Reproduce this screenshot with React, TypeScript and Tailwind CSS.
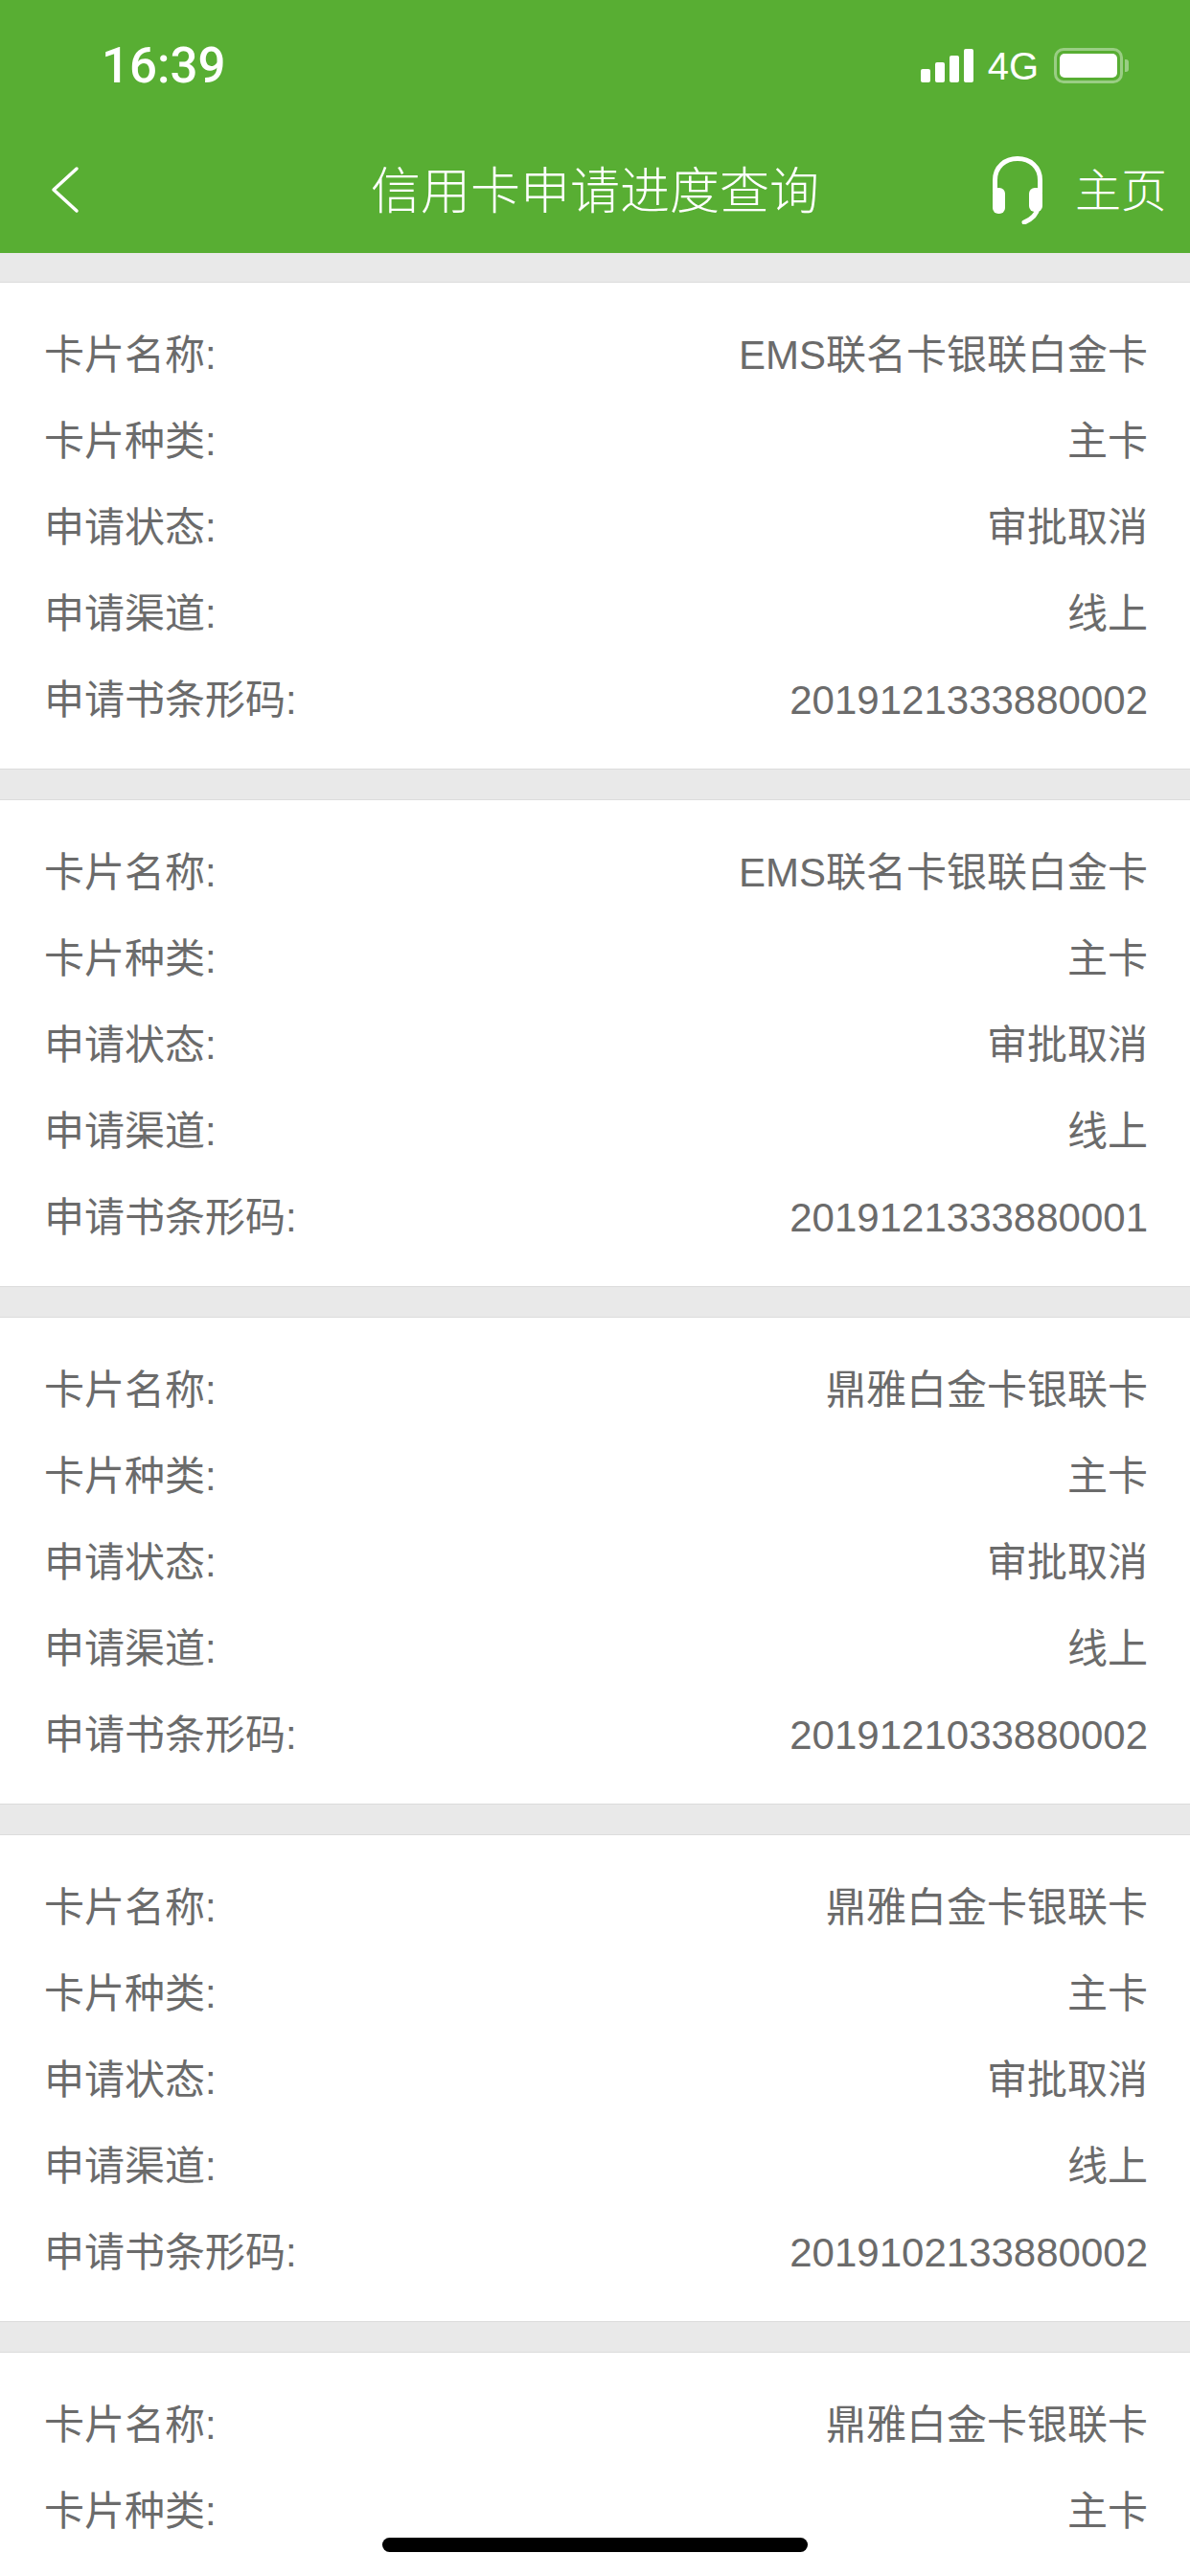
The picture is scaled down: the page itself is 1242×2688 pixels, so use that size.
const applications = [
  { name: 'EMS联名卡银联白金卡', type: '主卡', status: '审批取消', channel: '线上', barcode: '2019121333880002' },
  { name: 'EMS联名卡银联白金卡', type: '主卡', status: '审批取消', channel: '线上', barcode: '2019121333880001' },
  { name: '鼎雅白金卡银联卡', type: '主卡', status: '审批取消', channel: '线上', barcode: '2019121033880002' },
  { name: '鼎雅白金卡银联卡', type: '主卡', status: '审批取消', channel: '线上', barcode: '2019102133880002' },
];

const Row = ({ label, value }: { label: string; value: string }) => (
  <div className="flex h-[90px] items-center justify-between">
    <span>{label}</span>
    <span>{value}</span>
  </div>
);

const StatusBar = () => (
  <div className="flex h-[136px] items-center justify-between pl-[106px] pr-[64px] pt-[1px] text-white">
    <span className="font-['Roboto',sans-serif] text-[51px] font-medium leading-none">16:39</span>
    <div className="flex items-center">
      {/* signal */}
      <div className="flex h-[35px] items-end gap-[5px]">
        <div className="h-[14px] w-[10px] rounded-[2px] bg-white" />
        <div className="h-[21px] w-[10px] rounded-[2px] bg-white" />
        <div className="h-[28px] w-[10px] rounded-[2px] bg-white" />
        <div className="h-[35px] w-[10px] rounded-[2px] bg-white" />
      </div>
      <span className="ml-[15px] font-['Liberation_Sans',sans-serif] text-[40px] leading-none">4G</span>
      {/* battery */}
      <div className="ml-[16px] flex items-center">
        <div className="h-[37px] w-[72px] rounded-[10px] border-[3px] border-white/40 p-[3px]">
          <div className="h-full w-full rounded-[5px] bg-white" />
        </div>
        <div className="ml-[2px] h-[13px] w-[4px] rounded-r-[3px] bg-white/40" />
      </div>
    </div>
  </div>
);

const Headset = () => (
  <svg width="52" height="71" viewBox="0 0 52 71" fill="none" className="mb-[4px]">
    <path d="M2.5 38V25C2.5 11 13 2.5 26 2.5S49.5 11 49.5 25v13" stroke="#fff" strokeWidth="5" />
    <rect x="0" y="33" width="13" height="27" rx="6" fill="#fff" />
    <rect x="38" y="33" width="14" height="25" rx="6" fill="#fff" />
    <path d="M47 54c-1 7-7 12-14 15" stroke="#fff" strokeWidth="5" strokeLinecap="round" />
  </svg>
);

const NavBar = () => (
  <div className="grid h-[128px] grid-cols-[1fr_auto_1fr] items-center text-white">
    <div className="pl-[50px]">
      <svg width="34" height="50" viewBox="0 0 34 50" fill="none" className="mb-[4px]">
        <path d="M30 3L6 25l24 22" stroke="#fff" strokeWidth="3.5" strokeLinecap="round" strokeLinejoin="round" />
      </svg>
    </div>
    <h1 className="text-[52px] font-light leading-none">信用卡申请进度查询</h1>
    <div className="flex items-center justify-end gap-[34px] pr-[24px]">
      <Headset />
      <span className="text-[48px] font-light leading-none">主页</span>
    </div>
  </div>
);

export default function App() {
  return (
    <div className="relative h-[2688px] overflow-hidden bg-[#e9e9e9] font-['Liberation_Sans','Noto_Sans_CJK_SC',sans-serif]">
      <header className="bg-[#58ae33]">
        <StatusBar />
        <NavBar />
      </header>

      <main className="flex flex-col gap-[31px] pt-[30px]">
        {applications.map((app) => (
          <section
            key={app.barcode}
            className="border-y border-[#dcdcdc] bg-white pb-[27px] pl-[46px] pr-[44px] pt-[30px] text-[42px] font-normal text-[#6b6b6b]"
          >
            <Row label="卡片名称:" value={app.name} />
            <Row label="卡片种类:" value={app.type} />
            <Row label="申请状态:" value={app.status} />
            <Row label="申请渠道:" value={app.channel} />
            <Row label="申请书条形码:" value={app.barcode} />
          </section>
        ))}
        {/* last card runs off the bottom of the screen */}
        <section className="border-y border-[#dcdcdc] bg-white pb-[27px] pl-[46px] pr-[44px] pt-[30px] text-[42px] font-normal text-[#6b6b6b]">
          <Row label="卡片名称:" value="鼎雅白金卡银联卡" />
          <Row label="卡片种类:" value="主卡" />
          <div className="h-[270px]" />
        </section>
      </main>

      {/* home indicator */}
      <div className="absolute bottom-[25px] left-[399px] h-[15px] w-[444px] rounded-full bg-black" />
    </div>
  );
}
